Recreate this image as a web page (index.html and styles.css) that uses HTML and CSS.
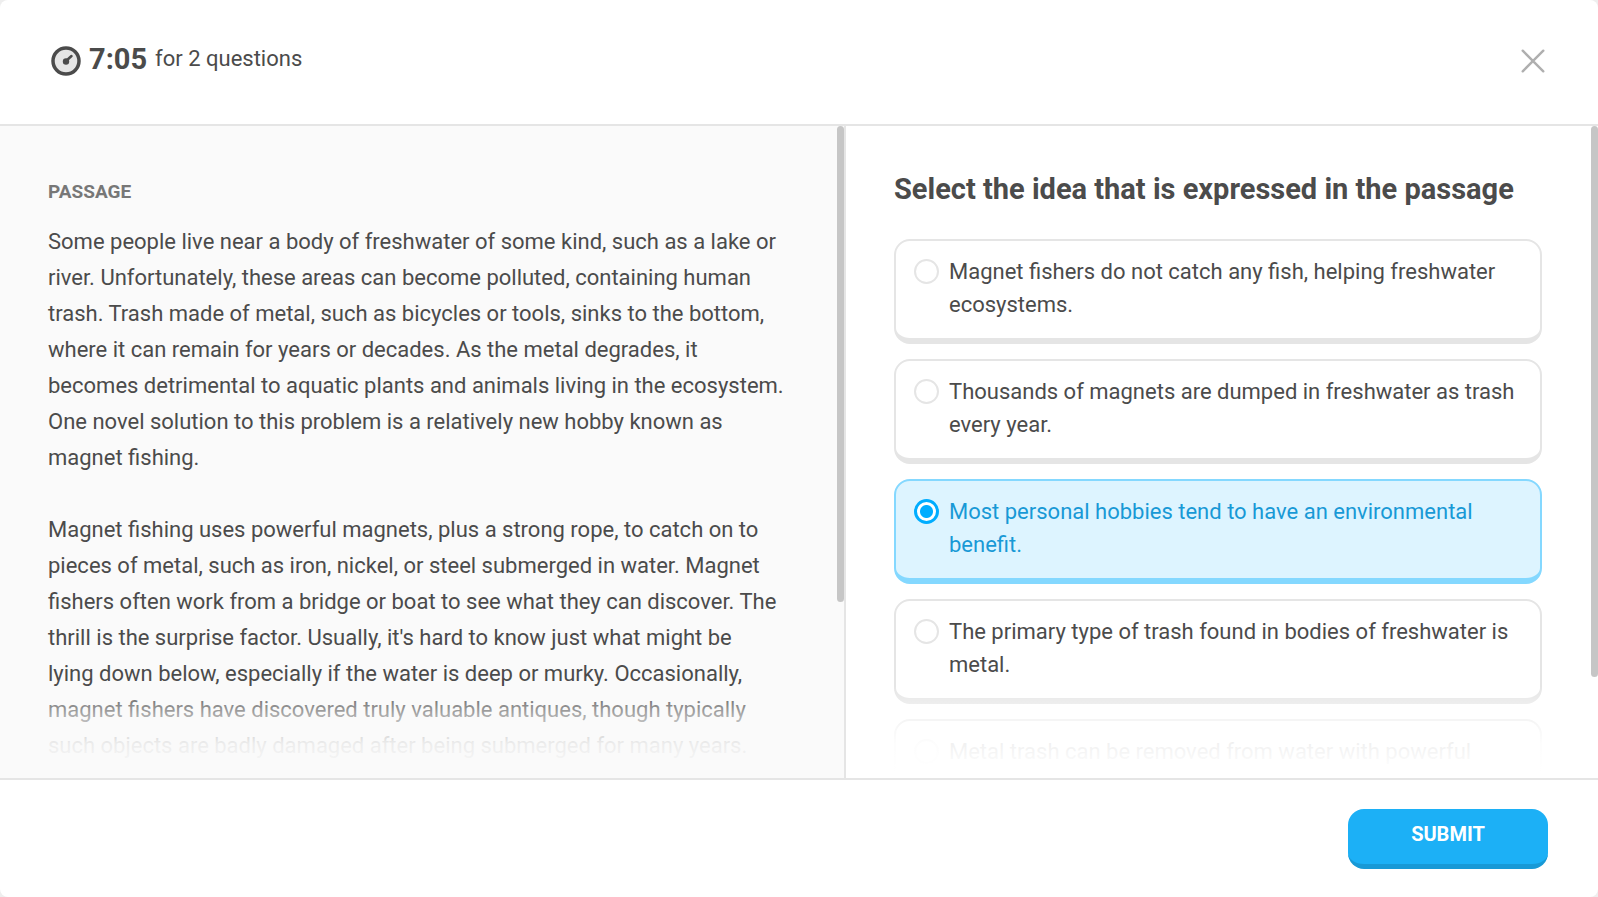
FILE: index.html
```html
<!DOCTYPE html>
<html lang="en">
<head>
  <meta charset="UTF-8"/>
  <meta name="viewport" content="width=device-width,initial-scale=1.0"/>
  <title>Interactive Reading</title>
  <link rel="stylesheet" href="styles.css">
</head>
<body>
  <div class="app">

    <header class="topbar">
      <div class="timer">
        <svg class="timer-icon" viewBox="0 0 30 30" aria-hidden="true">
          <circle cx="15" cy="15" r="13" fill="#e5e5e5" stroke="#4b4b4b" stroke-width="3.500"/>
          <circle cx="15" cy="15.500" r="3.200" fill="#4b4b4b"/>
          <path d="M15 15L20.500 10" stroke="#4b4b4b" stroke-width="2.500" stroke-linecap="round"/>
        </svg>
        <strong class="time">7:05</strong>
        <span class="timer-text">for 2 questions</span>
      </div>
      <button type="button" class="close" aria-label="Close">
        <svg viewBox="0 0 24 24" aria-hidden="true">
          <path d="M2.500 2.500L21.500 21.500M21.500 2.500L2.500 21.500" stroke="#afafaf" stroke-width="2.200" stroke-linecap="round"/>
        </svg>
      </button>
    </header>

    <main>
      <section class="panel passage">
        <div class="content">
          <h2>Passage</h2>
          <p>Some people live near a body of freshwater of some kind, such as a lake or river. Unfortunately, these areas can become polluted, containing human trash. Trash made of metal, such as bicycles or tools, sinks to the bottom, where it can remain for years or decades. As the metal degrades, it becomes detrimental to aquatic plants and animals living in the ecosystem. One novel solution to this problem is a relatively new hobby known as magnet fishing.</p>
          <p>Magnet fishing uses powerful magnets, plus a strong rope, to catch on to pieces of metal, such as iron, nickel, or steel submerged in water. Magnet fishers often work from a bridge or boat to see what they can discover. The thrill is the surprise factor. Usually, it's hard to know just what might be<br> lying down below, especially if the water is deep or murky. Occasionally, magnet fishers have discovered truly valuable antiques, though typically such objects are badly damaged after being submerged for many years.</p>
        </div>
      </section>

      <section class="panel question">
        <form class="content" id="answer-form">
          <h1>Select the idea that is expressed in the passage</h1>
          <div class="options">
            <label class="option">
              <input type="radio" name="idea">
              <span>Magnet fishers do not catch any fish, helping freshwater ecosystems.</span>
            </label>
            <label class="option">
              <input type="radio" name="idea">
              <span>Thousands of magnets are dumped in freshwater as trash every year.</span>
            </label>
            <label class="option">
              <input type="radio" name="idea" checked>
              <span>Most personal hobbies tend to have an environmental benefit.</span>
            </label>
            <label class="option">
              <input type="radio" name="idea">
              <span>The primary type of trash found in bodies of freshwater is metal.</span>
            </label>
            <label class="option">
              <input type="radio" name="idea">
              <span>Metal trash can be removed from water with powerful</span>
            </label>
          </div>
        </form>
      </section>
    </main>

    <footer>
      <button type="submit" class="submit" form="answer-form">Submit</button>
    </footer>

  </div>
</body>
</html>
```

FILE: styles.css
```css
:root {
  --text: #4b4b4b;
  --muted: #777777;
  --line: #e5e5e5;
  --thumb: #c6c6c6;
  --panel: #fafafa;
  --white: #ffffff;
  --blue: #1cb0f6;
  --blue-dark: #1899d6;
  --blue-line: #84d8ff;
  --blue-light: #ddf4ff;
}
* {
  box-sizing: border-box;
  margin: 0;
  padding: 0;
}
body {
  font-family: Roboto, "Liberation Sans", sans-serif;
  font-size: 22px;
  color: var(--text);
  background: #eeeeee;
}
.app {
  height: 100vh;
  display: flex;
  flex-direction: column;
  background: var(--white);
  border-radius: 8px;
  overflow: hidden;
}

/* header */
.topbar {
  flex: none;
  height: 126px;
  padding: 0 52px 2px 51px;
  border-bottom: 2px solid var(--line);
  display: flex;
  align-items: center;
  justify-content: space-between;
}
.timer {
  display: flex;
  align-items: center;
}
.timer-icon {
  width: 30px;
  height: 30px;
  margin-right: 8px;
}
.time {
  font-size: 29px;
  line-height: 32px;
  margin: 0 8px 4px 0;
}
.timer-text {
  line-height: 32px;
  margin-bottom: 4px;
}
.close {
  background: none;
  border: none;
  cursor: pointer;
}
.close svg {
  display: block;
  width: 26px;
  height: 26px;
}

/* two panels */
main {
  flex: 1;
  min-height: 0;
  display: grid;
  grid-template-columns: 9fr 8fr;
}
.panel {
  position: relative;
  overflow: hidden;
  min-width: 0;
}
.content {
  height: 100%;
  overflow: hidden;
}
.passage {
  background: var(--panel);
  border-right: 2px solid var(--line);
}
.passage .content {
  padding: 48px 56px 0 48px;
}
.question .content {
  padding: 45px 56px 0 48px;
}

/* fade at the bottom */
.panel::before {
  content: "";
  position: absolute;
  left: 0;
  right: 0;
  bottom: 0;
  height: 96px;
  background: linear-gradient(to bottom, rgba(255,255,255,0) 4%, rgba(255,255,255,0.54) 34%, rgba(255,255,255,0.92) 64%, var(--white) 93%);
  pointer-events: none;
  z-index: 1;
}
.passage::before {
  background: linear-gradient(to bottom, rgba(250,250,250,0) 4%, rgba(250,250,250,0.54) 34%, rgba(250,250,250,0.92) 64%, var(--panel) 93%);
}

/* scroll thumb */
.panel::after {
  content: "";
  position: absolute;
  top: 0;
  right: 0;
  width: 7px;
  height: 73%;
  border-radius: 4px;
  background: var(--thumb);
  z-index: 2;
}
.question::after {
  height: 84.5%;
}

h2 {
  font-size: 19px;
  line-height: 36px;
  color: var(--muted);
  text-transform: uppercase;
  margin-bottom: 14px;
}
.passage p {
  line-height: 36px;
  margin-bottom: 36px;
}
h1 {
  font-size: 29px;
  line-height: 36px;
  margin-bottom: 32px;
}

/* answers */
.options {
  display: flex;
  flex-direction: column;
  gap: 15px;
}
.option {
  display: flex;
  align-items: flex-start;
  gap: 10px;
  min-height: 105px;
  padding: 14px 18px 12px;
  border: 2px solid var(--line);
  border-bottom-width: 6px;
  border-radius: 16px;
  line-height: 33px;
  cursor: pointer;
}
.option input {
  appearance: none;
  flex: none;
  width: 25px;
  height: 25px;
  margin-top: 4px;
  border: 2px solid var(--line);
  border-radius: 50%;
  background: var(--white);
}
.option input:checked {
  border: 3px solid #00adff;
  background: radial-gradient(circle, #00adff 6px, var(--white) 7px);
}
.option:has(input:checked) {
  color: var(--blue-dark);
  background: var(--blue-light);
  border-color: var(--blue-line);
}

/* footer */
footer {
  flex: none;
  height: 119px;
  padding: 0 50px;
  border-top: 2px solid var(--line);
  display: flex;
  align-items: center;
  justify-content: flex-end;
}
.submit {
  width: 200px;
  height: 60px;
  padding-bottom: 4px;
  font-family: inherit;
  font-size: 20px;
  font-weight: bold;
  text-transform: uppercase;
  color: var(--white);
  background: var(--blue);
  border: none;
  border-bottom: 5px solid var(--blue-dark);
  border-radius: 16px;
  cursor: pointer;
}
```
